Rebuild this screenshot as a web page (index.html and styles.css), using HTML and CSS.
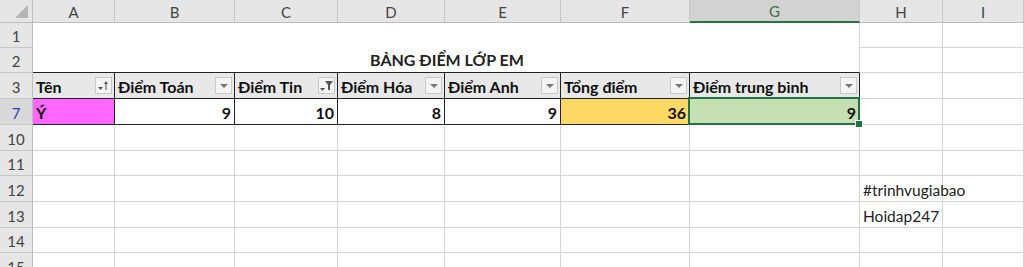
FILE: index.html
```html
<!DOCTYPE html>
<html lang="vi">

<head>
    <meta charset="UTF-8">
    <meta name="viewport" content="width=device-width, initial-scale=1.0">
    <title>Bảng điểm</title>
    <link rel="stylesheet" href="styles.css">
</head>

<body>
    <div class="sheet">
        <!-- column headers -->
        <div class="corner"><span class="corner-tri"></span></div>
        <div class="col-hd">A</div>
        <div class="col-hd">B</div>
        <div class="col-hd">C</div>
        <div class="col-hd">D</div>
        <div class="col-hd">E</div>
        <div class="col-hd">F</div>
        <div class="col-hd active">G</div>
        <div class="col-hd">H</div>
        <div class="col-hd">I</div>

        <!-- rows 1-2, A1:G2 merged -->
        <div class="row-hd">1</div>
        <div class="cell title">BẢNG ĐIỂM LỚP EM</div>
        <div class="cell"></div>
        <div class="cell"></div>
        <div class="row-hd">2</div>
        <div class="cell"></div>
        <div class="cell"></div>

        <!-- row 3: table header -->
        <div class="row-hd">3</div>
        <div class="cell th">Tên
            <span class="btn"><svg width="15" height="15" viewBox="0 0 15 15"><path d="M2 9h5l-2.5 3z" fill="#555"/><path d="M10 4v8" stroke="#555" stroke-width="1"/><path d="M8 6l2-3 2 3z" fill="#555"/></svg></span>
        </div>
        <div class="cell th">Điểm Toán<span class="btn dd"></span></div>
        <div class="cell th">Điểm Tin
            <span class="btn"><svg width="15" height="15" viewBox="0 0 15 15"><path d="M1 10h5l-2.5 3z" fill="#555"/><path d="M6 3h8l-3 4v5h-2v-5z" fill="#555"/></svg></span>
        </div>
        <div class="cell th">Điểm Hóa<span class="btn dd"></span></div>
        <div class="cell th">Điểm Anh<span class="btn dd"></span></div>
        <div class="cell th">Tổng điểm<span class="btn dd"></span></div>
        <div class="cell th">Điểm trung bình<span class="btn dd"></span></div>
        <div class="cell"></div>
        <div class="cell"></div>

        <!-- row 7: data -->
        <div class="row-hd filtered active">7</div>
        <div class="cell td pink">Ý</div>
        <div class="cell td num">9</div>
        <div class="cell td num">10</div>
        <div class="cell td num">8</div>
        <div class="cell td num">9</div>
        <div class="cell td num gold">36</div>
        <div class="cell td num green selected">9</div>
        <div class="cell"></div>
        <div class="cell"></div>

        <div class="row-hd">10</div>
        <div class="cell"></div><div class="cell"></div><div class="cell"></div><div class="cell"></div><div class="cell"></div><div class="cell"></div><div class="cell"></div><div class="cell"></div><div class="cell"></div>
        <div class="row-hd">11</div>
        <div class="cell"></div><div class="cell"></div><div class="cell"></div><div class="cell"></div><div class="cell"></div><div class="cell"></div><div class="cell"></div><div class="cell"></div><div class="cell"></div>
        <div class="row-hd">12</div>
        <div class="cell"></div><div class="cell"></div><div class="cell"></div><div class="cell"></div><div class="cell"></div><div class="cell"></div><div class="cell"></div><div class="cell txt">#trinhvugiabao</div><div class="cell"></div>
        <div class="row-hd">13</div>
        <div class="cell"></div><div class="cell"></div><div class="cell"></div><div class="cell"></div><div class="cell"></div><div class="cell"></div><div class="cell"></div><div class="cell txt">Hoidap247</div><div class="cell"></div>
        <div class="row-hd">14</div>
        <div class="cell"></div><div class="cell"></div><div class="cell"></div><div class="cell"></div><div class="cell"></div><div class="cell"></div><div class="cell"></div><div class="cell"></div><div class="cell"></div>
        <div class="row-hd">15</div>
        <div class="cell"></div><div class="cell"></div><div class="cell"></div><div class="cell"></div><div class="cell"></div><div class="cell"></div><div class="cell"></div><div class="cell"></div><div class="cell"></div>
    </div>
</body>

</html>
```

FILE: styles.css
```css
html,
body {
    margin: 0;
    background: #fff;
    overflow: hidden;
}

.sheet {
    display: grid;
    grid-template-columns: 33px 82px 120px 103px 107px 116px 129px 170px 83px 81px;
    grid-template-rows: 23px 25px 25px 26px 26px 26px 25px 26px 26px 25px 26px;
    font-family: Lato, "Open Sans", sans-serif;
    font-size: 15px;
    color: #222;
}

.corner,
.col-hd,
.row-hd,
.cell {
    box-sizing: border-box;
    border-right: 1px solid #d4d4d4;
    border-bottom: 1px solid #d4d4d4;
}

.corner {
    background: #e6e6e6;
    border-right-color: #bdbdbd;
    border-bottom-color: #bdbdbd;
    position: relative;
}

.corner-tri {
    position: absolute;
    right: 4px;
    bottom: 4px;
    width: 0;
    height: 0;
    border-left: 13px solid transparent;
    border-bottom: 13px solid #b4b4b4;
}

.col-hd {
    background: #e6e6e6;
    border-right-color: #c6c6c6;
    border-bottom-color: #bdbdbd;
    color: #444;
    display: flex;
    align-items: center;
    justify-content: center;
    padding-top: 1px;
}

.col-hd.active {
    background: #d2d2d2;
    color: #3c6e50;
    border-bottom: 2px solid #217346;
}

.row-hd {
    background: #e6e6e6;
    border-right-color: #bdbdbd;
    border-bottom-color: #c6c6c6;
    color: #444;
    display: flex;
    align-items: center;
    justify-content: center;
    padding-top: 2px;
}

.row-hd.active {
    background: #d9d9d9;
}

.row-hd.filtered {
    color: #3333b5;
}

.cell {
    display: flex;
    align-items: center;
    padding: 2px 3px 0;
    white-space: nowrap;
}

.title {
    grid-column: span 7;
    grid-row: span 2;
    align-items: flex-end;
    justify-content: center;
    padding: 0 0 3px 2px;
    font-weight: bold;
    font-size: 16px;
    border-right-color: #d4d4d4;
    border-bottom: 1px solid #222;
}

.th,
.td {
    font-weight: bold;
    font-size: 16px;
    border-right: 1px solid #222;
    border-bottom: 1px solid #222;
    color: #111;
}

.th {
    background: #e8e8e8;
    justify-content: space-between;
    padding-right: 2px;
}

.num {
    justify-content: flex-end;
}

.pink {
    background: #ff66ff;
}

.gold {
    background: #ffd966;
}

.green {
    background: #c6e0b4;
}

.selected {
    position: relative;
}

.selected::after {
    content: "";
    position: absolute;
    left: -2px;
    top: -2px;
    right: -1px;
    bottom: -1px;
    border: 2px solid #217346;
}

.selected::before {
    content: "";
    position: absolute;
    right: -4px;
    bottom: -4px;
    width: 6px;
    height: 6px;
    background: #217346;
    border: 1px solid #fff;
    z-index: 1;
}

.txt {
    color: #222;
    font-size: 15.5px;
}

/* filter dropdown buttons */
.btn {
    width: 17px;
    height: 17px;
    box-sizing: border-box;
    background: #f3f3f3;
    border: 1px solid #c8c8c8;
    position: relative;
    flex: none;
    margin-top: -2px;
}

.btn svg {
    display: block;
}

.dd::after {
    content: "";
    position: absolute;
    left: 4px;
    top: 6px;
    border-left: 4px solid transparent;
    border-right: 4px solid transparent;
    border-top: 4px solid #777;
}
```
